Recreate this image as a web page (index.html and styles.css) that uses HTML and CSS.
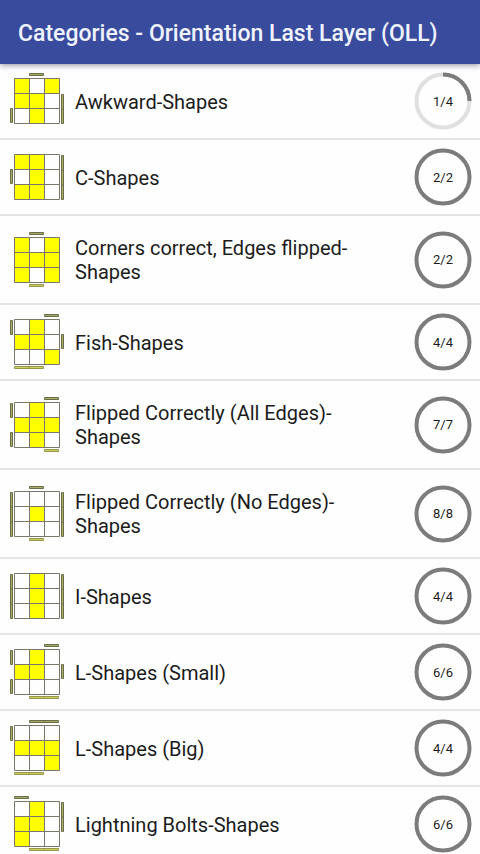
FILE: index.html
```html
<!DOCTYPE html>
<html lang="en">
<head>
<meta charset="utf-8">
<meta name="viewport" content="width=device-width, initial-scale=1">
<title>Categories - Orientation Last Layer (OLL)</title>
<link rel="stylesheet" href="styles.css">
</head>
<body>
<svg class="defs" aria-hidden="true">
  <defs>
    <path id="grid" d="M7.500 7.500h45v45h-45zM22.500 7.500v45M37.500 7.500v45M7.500 22.500h45M7.500 37.500h45"/>
    <path id="h1" d="M.5 .5h14v2h-14z"/>
    <path id="h2" d="M.5 .5h29v2h-29zM15 .5v2"/>
    <path id="v1" d="M.5 .5h2v14h-2z"/>
    <path id="v2" d="M.5 .5h2v29h-2zM.5 15h2"/>
    <path id="v3" d="M.5 .5h2v44h-2zM.5 15h2M.5 30h2"/>
    <circle id="ring" cx="29" cy="29" r="26.500"/>
  </defs>
</svg>
<header class="bar"><h1 class="title">Categories - Orientation Last Layer (OLL)</h1></header>
<main class="content">
<ul class="list">
  <li><a class="row" href="#awkward">
    <svg class="cube" viewBox="0 0 60 60" aria-hidden="true"><path class="on" d="M7 7h15v15h-15zM37 7h15v15h-15zM7 22h30v15h-30zM22 37h15v15h-15z"/><use class="lines" href="#grid"/><g class="side"><use href="#h1" x="22" y="2"/><use href="#v2" x="54" y="23"/><use href="#v1" x="3" y="37"/></g></svg>
    <span class="name">Awkward-Shapes</span>
    <span class="progress"><svg class="dial" viewBox="0 0 58 58" aria-hidden="true"><use class="track" href="#ring"/><path class="arc" d="M29 2.500A26.500 26.500 0 0 1 55.500 29"/></svg><span class="count">1/4</span></span>
  </a></li>
  <li><a class="row" href="#c">
    <svg class="cube" viewBox="0 0 60 60" aria-hidden="true"><path class="on" d="M7 7h30v45h-30z"/><path class="off" d="M7 22h15v15h-15z"/><use class="lines" href="#grid"/><g class="side"><use href="#v1" x="3" y="22"/><use href="#v3" x="54" y="8"/></g></svg>
    <span class="name">C-Shapes</span>
    <span class="progress"><svg class="dial" viewBox="0 0 58 58" aria-hidden="true"><use class="arc" href="#ring"/></svg><span class="count">2/2</span></span>
  </a></li>
  <li><a class="row" href="#corners">
    <svg class="cube" viewBox="0 0 60 60" aria-hidden="true"><path class="on" d="M7 7h45v45h-45z"/><path class="off" d="M22 7h15v15h-15zM22 37h15v15h-15z"/><use class="lines" href="#grid"/><g class="side"><use href="#h1" x="22" y="2"/><use class="low" href="#h1" x="22" y="54"/></g></svg>
    <span class="name">Corners correct, Edges flipped-Shapes</span>
    <span class="progress"><svg class="dial" viewBox="0 0 58 58" aria-hidden="true"><use class="arc" href="#ring"/></svg><span class="count">2/2</span></span>
  </a></li>
  <li><a class="row" href="#fish">
    <svg class="cube" viewBox="0 0 60 60" aria-hidden="true"><path class="on" d="M22 7h15v15h-15zM7 22h30v15h-30zM37 37h15v15h-15z"/><use class="lines" href="#grid"/><g class="side"><use href="#h1" x="37" y="2"/><use href="#v1" x="3" y="8"/><use href="#v1" x="54" y="22"/><use class="low" href="#h2" x="7" y="54"/></g></svg>
    <span class="name">Fish-Shapes</span>
    <span class="progress"><svg class="dial" viewBox="0 0 58 58" aria-hidden="true"><use class="arc" href="#ring"/></svg><span class="count">4/4</span></span>
  </a></li>
  <li><a class="row" href="#all-edges">
    <svg class="cube" viewBox="0 0 60 60" aria-hidden="true"><path class="on" d="M22 7h15v45h-15zM7 22h45v15h-45z"/><use class="lines" href="#grid"/><g class="side"><use href="#h1" x="37" y="2"/><use href="#v1" x="3" y="8"/><use href="#v1" x="3" y="37"/><use class="low" href="#h1" x="37" y="54"/></g></svg>
    <span class="name">Flipped Correctly (All Edges)-Shapes</span>
    <span class="progress"><svg class="dial" viewBox="0 0 58 58" aria-hidden="true"><use class="arc" href="#ring"/></svg><span class="count">7/7</span></span>
  </a></li>
  <li><a class="row" href="#no-edges">
    <svg class="cube" viewBox="0 0 60 60" aria-hidden="true"><path class="on" d="M22 22h15v15h-15z"/><use class="lines" href="#grid"/><g class="side"><use href="#h1" x="22" y="2"/><use href="#v3" x="3" y="8"/><use href="#v3" x="54" y="8"/><use class="low" href="#h1" x="22" y="54"/></g></svg>
    <span class="name">Flipped Correctly (No Edges)-Shapes</span>
    <span class="progress"><svg class="dial" viewBox="0 0 58 58" aria-hidden="true"><use class="arc" href="#ring"/></svg><span class="count">8/8</span></span>
  </a></li>
  <li><a class="row" href="#i">
    <svg class="cube" viewBox="0 0 60 60" aria-hidden="true"><path class="on" d="M22 7h15v45h-15z"/><use class="lines" href="#grid"/><g class="side"><use href="#v3" x="3" y="8"/><use href="#v3" x="54" y="8"/></g></svg>
    <span class="name">I-Shapes</span>
    <span class="progress"><svg class="dial" viewBox="0 0 58 58" aria-hidden="true"><use class="arc" href="#ring"/></svg><span class="count">4/4</span></span>
  </a></li>
  <li><a class="row" href="#l-small">
    <svg class="cube" viewBox="0 0 60 60" aria-hidden="true"><path class="on" d="M22 7h15v30h-30v-15h15z"/><use class="lines" href="#grid"/><g class="side"><use href="#h1" x="37" y="2"/><use href="#v1" x="3" y="8"/><use href="#v1" x="3" y="37"/><use href="#v1" x="54" y="22"/><use class="low" href="#h2" x="22" y="54"/></g></svg>
    <span class="name">L-Shapes (Small)</span>
    <span class="progress"><svg class="dial" viewBox="0 0 58 58" aria-hidden="true"><use class="arc" href="#ring"/></svg><span class="count">6/6</span></span>
  </a></li>
  <li><a class="row" href="#l-big">
    <svg class="cube" viewBox="0 0 60 60" aria-hidden="true"><path class="on" d="M7 22h45v30h-15v-15h-30z"/><use class="lines" href="#grid"/><g class="side"><use href="#h2" x="22" y="2"/><use href="#v1" x="3" y="8"/><use class="low" href="#h2" x="7" y="54"/></g></svg>
    <span class="name">L-Shapes (Big)</span>
    <span class="progress"><svg class="dial" viewBox="0 0 58 58" aria-hidden="true"><use class="arc" href="#ring"/></svg><span class="count">4/4</span></span>
  </a></li>
  <li><a class="row" href="#lightning">
    <svg class="cube" viewBox="0 0 60 60" aria-hidden="true"><path class="on" d="M22 7h15v30h-15v15h-15v-30h15z"/><use class="lines" href="#grid"/><g class="side"><use href="#h1" x="7" y="2"/><use href="#v2" x="54" y="8"/><use class="low" href="#h2" x="22" y="54"/></g></svg>
    <span class="name">Lightning Bolts-Shapes</span>
    <span class="progress"><svg class="dial" viewBox="0 0 58 58" aria-hidden="true"><use class="arc" href="#ring"/></svg><span class="count">6/6</span></span>
  </a></li>
</ul>
</main>
</body>
</html>
```
FILE: styles.css
```css
* { box-sizing: border-box; }

body {
  margin: 0;
  height: 100vh;
  display: flex;
  flex-direction: column;
  background: #fefefe;
  color: #1c1c1c;
  font-family: Roboto, "Liberation Sans", sans-serif;
}

.defs { display: none; }

.bar {
  flex: none;
  display: flex;
  align-items: center;
  height: 64px;
  padding: 4px 18px 0;
  background: #394b9c;
  box-shadow: 0 1px 6px rgba(20, 20, 60, 0.5);
  z-index: 1;
}

.title {
  margin: 0;
  color: #eef3ff;
  font-size: 23px;
  line-height: 28px;
  font-weight: 500;
  white-space: nowrap;
}

.content {
  flex: 1;
  min-height: 0;
  overflow-y: auto;
  scrollbar-width: none;
}

.list {
  margin: 0;
  padding: 0;
  list-style: none;
}

.row {
  display: flex;
  align-items: center;
  gap: 8px;
  min-height: 76px;
  padding: 8px 8px 8px 7px;
  border-bottom: 2px solid #e4e4e4;
  color: inherit;
  text-decoration: none;
}

.cube {
  flex: none;
  width: 60px;
  height: 60px;
  margin: -1px 0;
}

.on { fill: #ffff00; }
.off { fill: #ffffff; }
.lines { fill: none; stroke: #77776c; stroke-width: 1; }
.side { fill: #a9ad62; stroke: #6a6d4c; stroke-width: 1; }
.low { fill: #d0d060; stroke: #94964c; }

.name {
  flex: 1;
  padding: 12px 48px 11px 0;
  font-size: 20px;
  line-height: 24px;
}

.progress {
  flex: none;
  display: grid;
  place-items: center;
}

.dial, .count { grid-area: 1 / 1; }

.dial {
  display: block;
  width: 58px;
  height: 58px;
  fill: none;
  stroke-width: 4;
}

.track { stroke: #e0e0e0; }
.arc { stroke: #7c7c7c; }

.count {
  padding-top: 1px;
  font-size: 13px;
  line-height: 16px;
}
```
